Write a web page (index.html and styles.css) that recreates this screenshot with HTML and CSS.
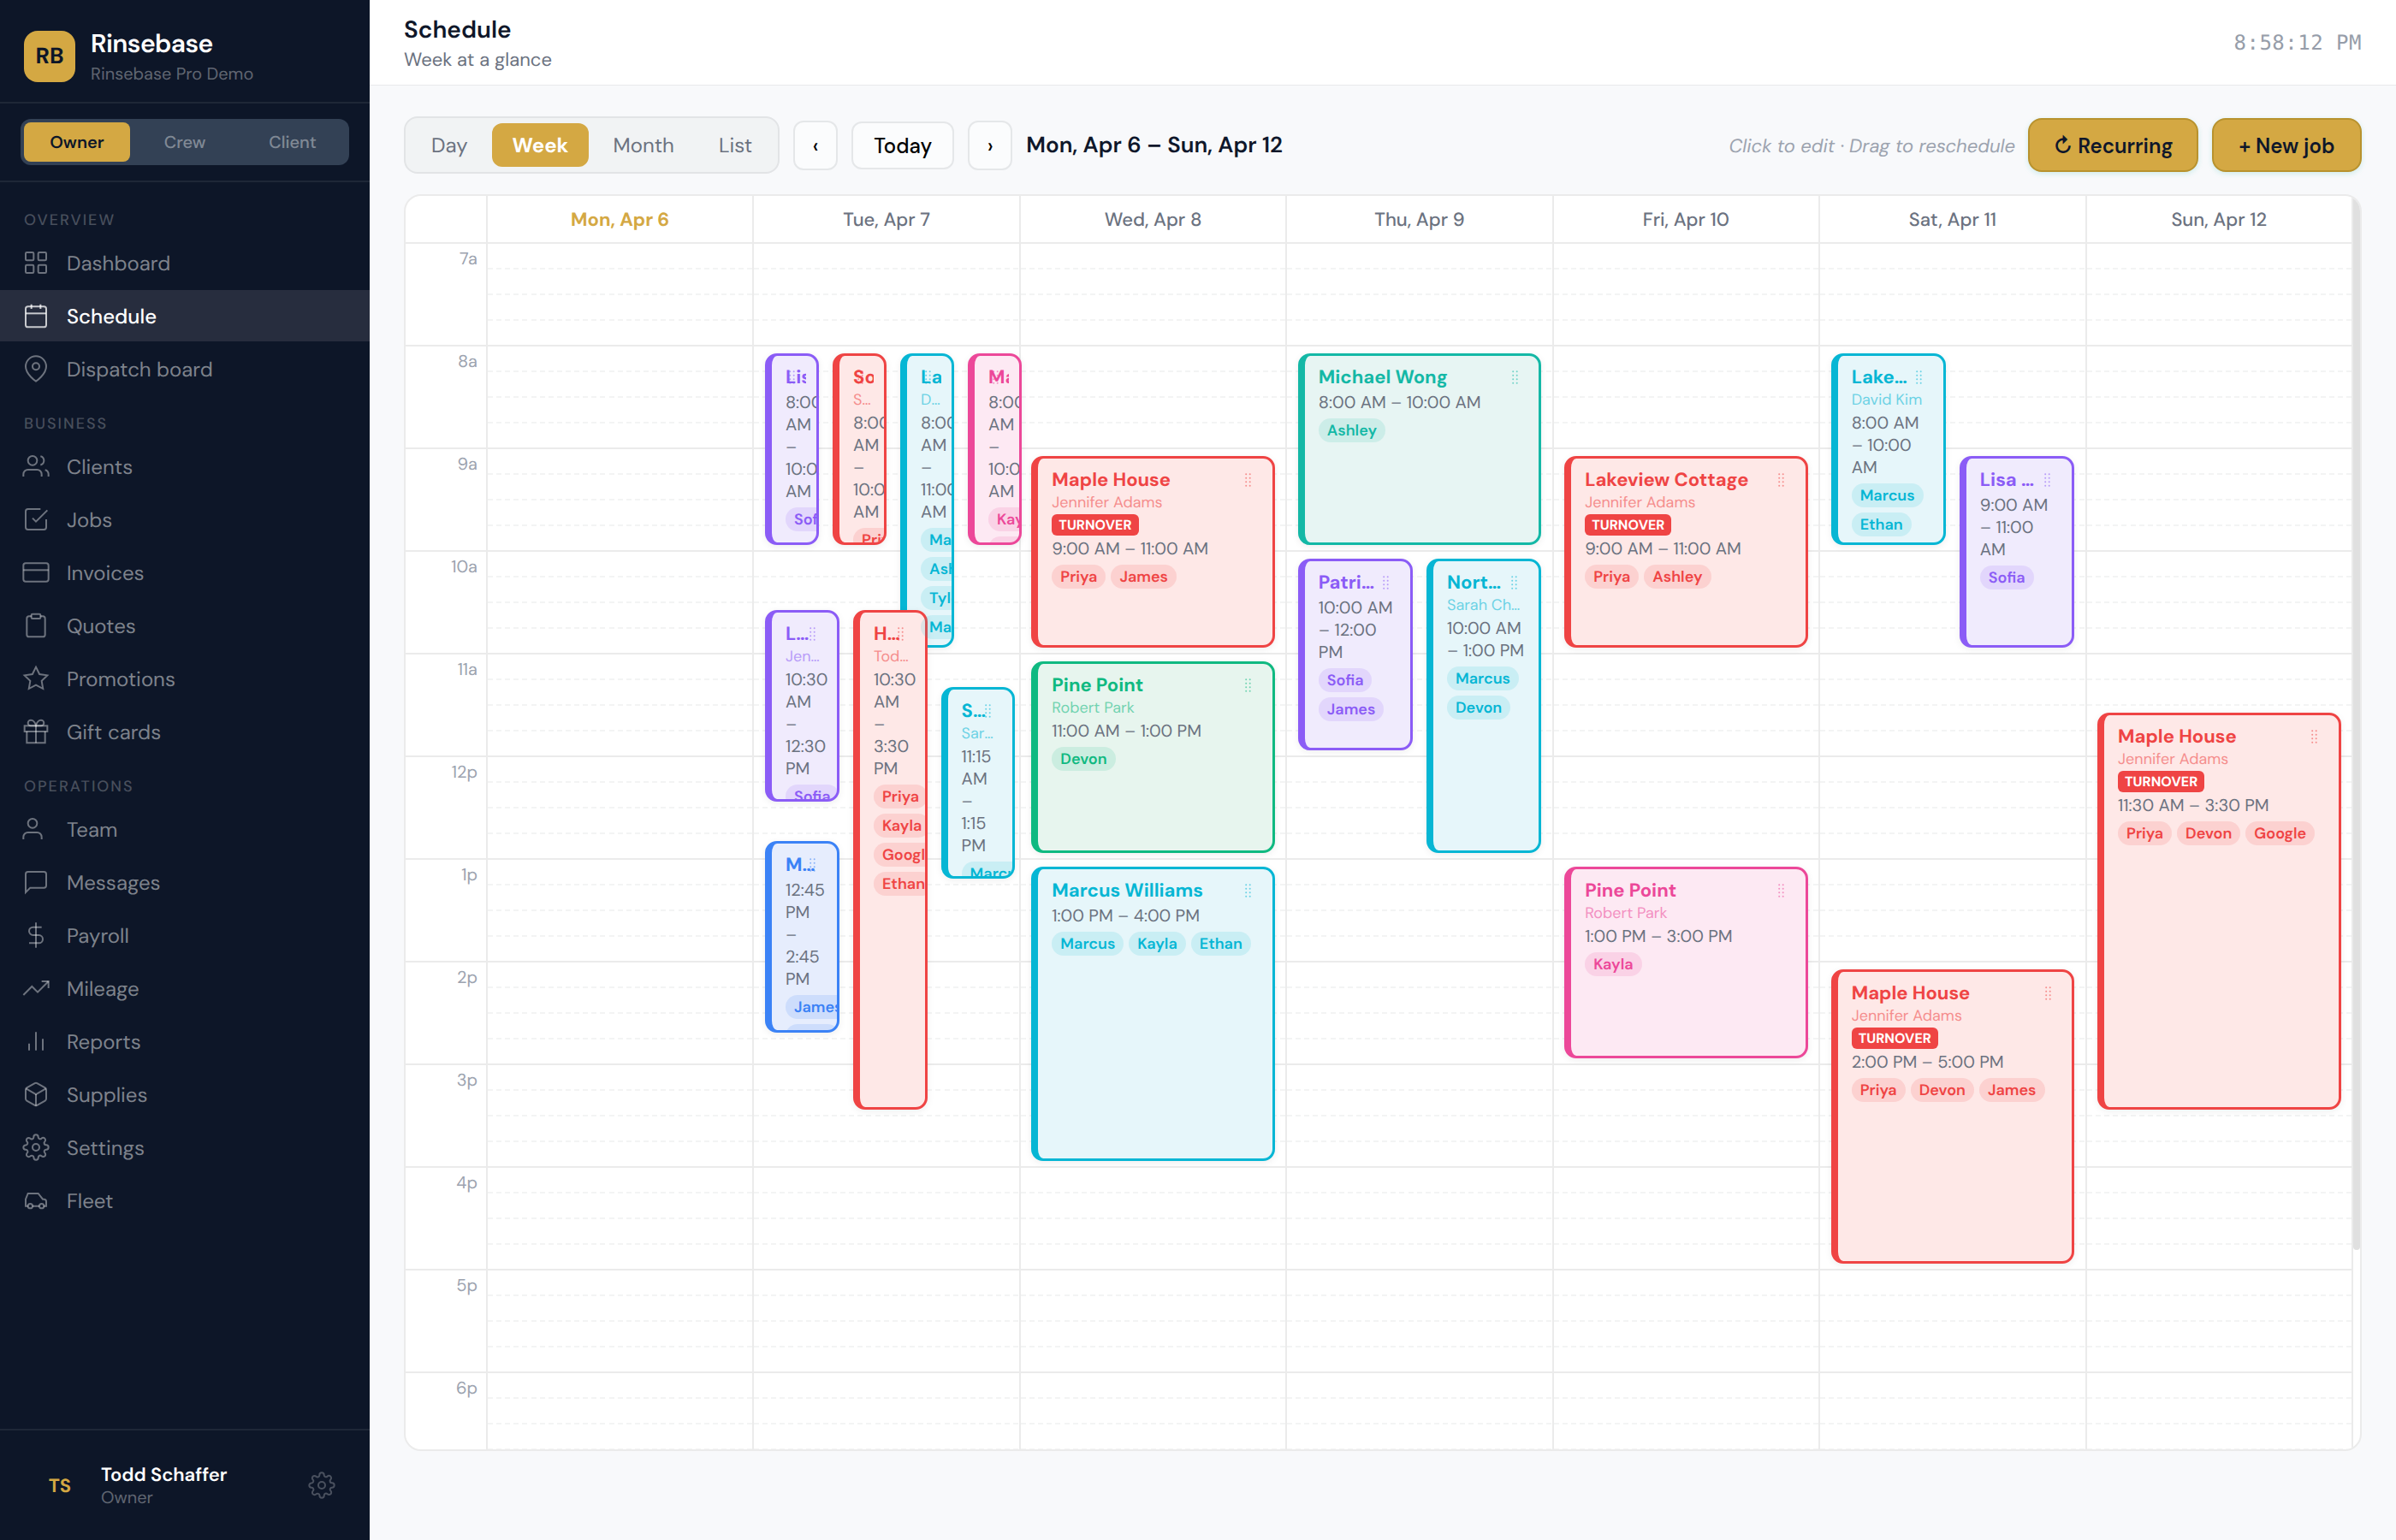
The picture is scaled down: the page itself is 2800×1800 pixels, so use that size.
FILE: index.html
```html
<!DOCTYPE html>
<html lang="en">
<head>
<meta charset="utf-8">
<title>Rinsebase – Schedule</title>
<link rel="stylesheet" href="styles.css">
</head>
<body>
<svg class="sprite" width="0" height="0" aria-hidden="true">
  <symbol id="grip" viewBox="0 0 9 18"><circle cx="2.2" cy="2.2" r="1"/><circle cx="6.7" cy="2.2" r="1"/><circle cx="2.2" cy="6.7" r="1"/><circle cx="6.7" cy="6.7" r="1"/><circle cx="2.2" cy="11.2" r="1"/><circle cx="6.7" cy="11.2" r="1"/><circle cx="2.2" cy="15.7" r="1"/><circle cx="6.7" cy="15.7" r="1"/></symbol>
  <symbol id="gear" viewBox="0 0 24 24"><circle cx="12" cy="12" r="3"/><path d="M19.4 15a1.65 1.65 0 0 0 .33 1.82l.06.06a2 2 0 0 1 0 2.83 2 2 0 0 1-2.83 0l-.06-.06a1.65 1.65 0 0 0-1.82-.33 1.65 1.65 0 0 0-1 1.51V21a2 2 0 0 1-2 2 2 2 0 0 1-2-2v-.09A1.65 1.65 0 0 0 9 19.4a1.65 1.65 0 0 0-1.82.33l-.06.06a2 2 0 0 1-2.83 0 2 2 0 0 1 0-2.83l.06-.06a1.65 1.65 0 0 0 .33-1.82 1.65 1.65 0 0 0-1.51-1H3a2 2 0 0 1-2-2 2 2 0 0 1 2-2h.09A1.65 1.65 0 0 0 4.6 9a1.65 1.65 0 0 0-.33-1.82l-.06-.06a2 2 0 0 1 0-2.83 2 2 0 0 1 2.83 0l.06.06a1.65 1.65 0 0 0 1.82.33H9a1.65 1.65 0 0 0 1-1.51V3a2 2 0 0 1 2-2 2 2 0 0 1 2 2v.09a1.65 1.65 0 0 0 1 1.51 1.65 1.65 0 0 0 1.82-.33l.06-.06a2 2 0 0 1 2.83 0 2 2 0 0 1 0 2.83l-.06.06a1.65 1.65 0 0 0-.33 1.82V9a1.65 1.65 0 0 0 1.51 1H21a2 2 0 0 1 2 2 2 2 0 0 1-2 2h-.09a1.65 1.65 0 0 0-1.51 1z"/></symbol>
</svg>
<div class="app">
  <aside class="sidebar">
    <div class="brand">
      <div class="logo">RB</div>
      <div>
        <div class="brand-name">Rinsebase</div>
        <div class="brand-sub">Rinsebase Pro Demo</div>
      </div>
    </div>
    <div class="roles">
      <div class="role-switch"><span class="role on">Owner</span><span class="role">Crew</span><span class="role">Client</span></div>
    </div>
    <nav class="nav">
      <div class="nav-label">OVERVIEW</div>
      <a class="item"><svg viewBox="0 0 24 24"><rect x="3" y="3" width="7" height="7" rx="1"/><rect x="14" y="3" width="7" height="7" rx="1"/><rect x="3" y="14" width="7" height="7" rx="1"/><rect x="14" y="14" width="7" height="7" rx="1"/></svg>Dashboard</a>
      <a class="item active"><svg viewBox="0 0 24 24"><rect x="3" y="4" width="18" height="18" rx="2"/><path d="M16 2v4M8 2v4"/><path d="M3 10h18"/></svg>Schedule</a>
      <a class="item"><svg viewBox="0 0 24 24"><path d="M21 10c0 7-9 13-9 13s-9-6-9-13a9 9 0 0 1 18 0z"/><circle cx="12" cy="10" r="3"/></svg>Dispatch board</a>
      <div class="nav-label">BUSINESS</div>
      <a class="item"><svg viewBox="0 0 24 24"><path d="M17 21v-2a4 4 0 0 0-4-4H5a4 4 0 0 0-4 4v2"/><circle cx="9" cy="7" r="4"/><path d="M23 21v-2a4 4 0 0 0-3-3.87M16 3.13a4 4 0 0 1 0 7.75"/></svg>Clients</a>
      <a class="item"><svg viewBox="0 0 24 24"><path d="M9 11l3 3L22 4"/><path d="M21 12v7a2 2 0 0 1-2 2H5a2 2 0 0 1-2-2V5a2 2 0 0 1 2-2h11"/></svg>Jobs</a>
      <a class="item"><svg viewBox="0 0 24 24"><rect x="1" y="4" width="22" height="16" rx="2"/><path d="M1 10h22"/></svg>Invoices</a>
      <a class="item"><svg viewBox="0 0 24 24"><path d="M16 4h2a2 2 0 0 1 2 2v14a2 2 0 0 1-2 2H6a2 2 0 0 1-2-2V6a2 2 0 0 1 2-2h2"/><rect x="8" y="2" width="8" height="4" rx="1"/></svg>Quotes</a>
      <a class="item"><svg viewBox="0 0 24 24"><path d="M12 2l3.09 6.26L22 9.27l-5 4.87 1.18 6.88L12 17.77l-6.18 3.25L7 14.14 2 9.27l6.91-1.01z"/></svg>Promotions</a>
      <a class="item"><svg viewBox="0 0 24 24"><path d="M20 12v10H4V12"/><rect x="2" y="7" width="20" height="5"/><path d="M12 22V7"/><path d="M12 7H7.5a2.5 2.5 0 0 1 0-5C11 2 12 7 12 7z"/><path d="M12 7h4.500a2.500 2.500 0 0 0 0-5C13 2 12 7 12 7z"/></svg>Gift cards</a>
      <div class="nav-label">OPERATIONS</div>
      <a class="item"><svg viewBox="0 0 24 24"><path d="M17 21v-2a4 4 0 0 0-4-4H5a4 4 0 0 0-4 4v2"/><circle cx="9" cy="7" r="4"/></svg>Team</a>
      <a class="item"><svg viewBox="0 0 24 24"><path d="M21 15a2 2 0 0 1-2 2H7l-4 4V5a2 2 0 0 1 2-2h14a2 2 0 0 1 2 2z"/></svg>Messages</a>
      <a class="item"><svg viewBox="0 0 24 24"><path d="M12 1v22"/><path d="M17 5H9.500a3.500 3.500 0 0 0 0 7h5a3.500 3.500 0 0 1 0 7H6"/></svg>Payroll</a>
      <a class="item"><svg viewBox="0 0 24 24"><path d="M23 6l-9.500 9.500-5-5L1 18"/><path d="M17 6h6v6"/></svg>Mileage</a>
      <a class="item"><svg viewBox="0 0 24 24"><path d="M18 20V10M12 20V4M6 20v-6"/></svg>Reports</a>
      <a class="item"><svg viewBox="0 0 24 24"><path d="M21 16V8a2 2 0 0 0-1-1.730l-7-4a2 2 0 0 0-2 0l-7 4A2 2 0 0 0 3 8v8a2 2 0 0 0 1 1.730l7 4a2 2 0 0 0 2 0l7-4A2 2 0 0 0 21 16z"/><path d="M3.270 6.960L12 12.010l8.730-5.050"/><path d="M12 22.080V12"/></svg>Supplies</a>
      <a class="item"><svg><use href="#gear"/></svg>Settings</a>
      <a class="item"><svg viewBox="0 0 24 24"><path d="M5 17H3v-6l2-5h9l4 5h1a2 2 0 0 1 2 2v4h-2M9 17h6"/><circle cx="7" cy="17" r="2"/><circle cx="17" cy="17" r="2"/></svg>Fleet</a>
    </nav>
    <div class="user">
      <div class="avatar">TS</div>
      <div class="user-text">
        <div class="user-name">Todd Schaffer</div>
        <div class="user-role">Owner</div>
      </div>
      <svg class="user-gear"><use href="#gear"/></svg>
    </div>
  </aside>

  <main class="main">
    <header class="topbar">
      <div>
        <div class="page-title">Schedule</div>
        <div class="page-sub">Week at a glance</div>
      </div>
      <div class="clock">8:58:12 PM</div>
    </header>

    <section class="content">
      <div class="toolbar">
        <div class="segments"><span class="seg">Day</span><span class="seg on">Week</span><span class="seg">Month</span><span class="seg">List</span></div>
        <button class="btn arrow">‹</button>
        <button class="btn today">Today</button>
        <button class="btn arrow">›</button>
        <div class="range">Mon, Apr 6 – Sun, Apr 12</div>
        <div class="hint">Click to edit · Drag to reschedule</div>
        <button class="btn gold recurring">↻ Recurring</button>
        <button class="btn gold">+ New job</button>
      </div>

      <div class="calendar">
        <div class="cal-head">
          <div class="corner"></div>
          <div class="day-name today-name">Mon, Apr 6</div>
          <div class="day-name">Tue, Apr 7</div>
          <div class="day-name">Wed, Apr 8</div>
          <div class="day-name">Thu, Apr 9</div>
          <div class="day-name">Fri, Apr 10</div>
          <div class="day-name">Sat, Apr 11</div>
          <div class="day-name">Sun, Apr 12</div>
        </div>
        <div class="cal-body">
          <div class="hours">
            <div class="hour">7a</div><div class="hour">8a</div><div class="hour">9a</div><div class="hour">10a</div><div class="hour">11a</div><div class="hour">12p</div><div class="hour">1p</div><div class="hour">2p</div><div class="hour">3p</div><div class="hour">4p</div><div class="hour">5p</div><div class="hour">6p</div>
          </div>
          <div class="day"></div>
          <div class="day"><div class="lane">
            <div class="event purple" style="top:128px;height:224px;left:12.5px;width:63px"><svg class="grip"><use href="#grip"/></svg><div class="title">Lisa Nguyen</div><div class="time">8:00 AM – 10:00 AM</div><div class="chips"><span class="chip">Sofia</span></div></div>
            <div class="event red" style="top:128px;height:224px;left:91.7px;width:63px"><svg class="grip"><use href="#grip"/></svg><div class="title">South Shore</div><div class="client">Sarah Chen</div><div class="time">8:00 AM – 10:00 AM</div><div class="chips"><span class="chip">Priya</span></div></div>
            <div class="event cyan" style="top:128px;height:344px;left:170.7px;width:63px"><svg class="grip"><use href="#grip"/></svg><div class="title">Lake House</div><div class="client">David Kim</div><div class="time">8:00 AM – 11:00 AM</div><div class="chips"><span class="chip">Marcus</span><span class="chip">Ashley</span><span class="chip">Tyler</span><span class="chip">Maria</span></div></div>
            <div class="event pink" style="top:128px;height:224px;left:249.7px;width:63px"><svg class="grip"><use href="#grip"/></svg><div class="title">Maria Lopez</div><div class="time">8:00 AM – 10:00 AM</div><div class="chips"><span class="chip">Kayla</span><span class="chip">Devon</span></div></div>
            <div class="event purple" style="top:428px;height:224px;left:12.5px;width:87px"><svg class="grip"><use href="#grip"/></svg><div class="title">Lakeview Cottage</div><div class="client">Jennifer Adams</div><div class="time">10:30 AM – 12:30 PM</div><div class="chips"><span class="chip">Sofia</span></div></div>
            <div class="event red" style="top:428px;height:584px;left:115.5px;width:87px"><svg class="grip"><use href="#grip"/></svg><div class="title">Harbor House</div><div class="client">Todd Schaffer</div><div class="time">10:30 AM – 3:30 PM</div><div class="chips"><span class="chip">Priya</span><span class="chip">Kayla</span><span class="chip">Google</span><span class="chip">Ethan</span></div></div>
            <div class="event cyan" style="top:518px;height:224px;left:218.2px;width:86px"><svg class="grip"><use href="#grip"/></svg><div class="title">South Shore</div><div class="client">Sarah Chen</div><div class="time">11:15 AM – 1:15 PM</div><div class="chips"><span class="chip">Marcus</span></div></div>
            <div class="event blue" style="top:698px;height:224px;left:12.5px;width:87px"><svg class="grip"><use href="#grip"/></svg><div class="title">Michael Wong</div><div class="time">12:45 PM – 2:45 PM</div><div class="chips"><span class="chip">James</span><span class="chip">Tyler</span></div></div>
          </div></div>
          <div class="day"><div class="lane">
            <div class="event red" style="top:248px;height:224px;left:12.5px;width:284.5px"><svg class="grip"><use href="#grip"/></svg><div class="title">Maple House</div><div class="client">Jennifer Adams</div><div class="badge">TURNOVER</div><div class="time">9:00 AM – 11:00 AM</div><div class="chips"><span class="chip">Priya</span><span class="chip">James</span></div></div>
            <div class="event green" style="top:488px;height:224px;left:12.5px;width:284.5px"><svg class="grip"><use href="#grip"/></svg><div class="title">Pine Point</div><div class="client">Robert Park</div><div class="time">11:00 AM – 1:00 PM</div><div class="chips"><span class="chip">Devon</span></div></div>
            <div class="event cyan" style="top:728px;height:344px;left:12.5px;width:284.5px"><svg class="grip"><use href="#grip"/></svg><div class="title">Marcus Williams</div><div class="time">1:00 PM – 4:00 PM</div><div class="chips"><span class="chip">Marcus</span><span class="chip">Kayla</span><span class="chip">Ethan</span></div></div>
          </div></div>
          <div class="day"><div class="lane">
            <div class="event teal" style="top:128px;height:224px;left:12.5px;width:284.5px"><svg class="grip"><use href="#grip"/></svg><div class="title">Michael Wong</div><div class="time">8:00 AM – 10:00 AM</div><div class="chips"><span class="chip">Ashley</span></div></div>
            <div class="event purple" style="top:368px;height:224px;left:12.5px;width:134px"><svg class="grip"><use href="#grip"/></svg><div class="title">Patricia Moore</div><div class="time">10:00 AM – 12:00 PM</div><div class="chips"><span class="chip">Sofia</span><span class="chip">James</span></div></div>
            <div class="event cyan" style="top:368px;height:344px;left:162.7px;width:134px"><svg class="grip"><use href="#grip"/></svg><div class="title">North Shore</div><div class="client">Sarah Chen</div><div class="time">10:00 AM – 1:00 PM</div><div class="chips"><span class="chip">Marcus</span><span class="chip">Devon</span></div></div>
          </div></div>
          <div class="day"><div class="lane">
            <div class="event red" style="top:248px;height:224px;left:12.5px;width:284.5px"><svg class="grip"><use href="#grip"/></svg><div class="title">Lakeview Cottage</div><div class="client">Jennifer Adams</div><div class="badge">TURNOVER</div><div class="time">9:00 AM – 11:00 AM</div><div class="chips"><span class="chip">Priya</span><span class="chip">Ashley</span></div></div>
            <div class="event pink" style="top:728px;height:224px;left:12.5px;width:284.5px"><svg class="grip"><use href="#grip"/></svg><div class="title">Pine Point</div><div class="client">Robert Park</div><div class="time">1:00 PM – 3:00 PM</div><div class="chips"><span class="chip">Kayla</span></div></div>
          </div></div>
          <div class="day"><div class="lane">
            <div class="event cyan" style="top:128px;height:224px;left:12.5px;width:134px"><svg class="grip"><use href="#grip"/></svg><div class="title">Lakeside Loft</div><div class="client">David Kim</div><div class="time">8:00 AM – 10:00 AM</div><div class="chips"><span class="chip">Marcus</span><span class="chip">Ethan</span></div></div>
            <div class="event purple" style="top:248px;height:224px;left:162.7px;width:134px"><svg class="grip"><use href="#grip"/></svg><div class="title">Lisa Nguyen</div><div class="time">9:00 AM – 11:00 AM</div><div class="chips"><span class="chip">Sofia</span></div></div>
            <div class="event red" style="top:848px;height:344px;left:12.5px;width:284.5px"><svg class="grip"><use href="#grip"/></svg><div class="title">Maple House</div><div class="client">Jennifer Adams</div><div class="badge">TURNOVER</div><div class="time">2:00 PM – 5:00 PM</div><div class="chips"><span class="chip">Priya</span><span class="chip">Devon</span><span class="chip">James</span></div></div>
          </div></div>
          <div class="day"><div class="lane">
            <div class="event red" style="top:548px;height:464px;left:12.5px;width:284.5px"><svg class="grip"><use href="#grip"/></svg><div class="title">Maple House</div><div class="client">Jennifer Adams</div><div class="badge">TURNOVER</div><div class="time">11:30 AM – 3:30 PM</div><div class="chips"><span class="chip">Priya</span><span class="chip">Devon</span><span class="chip">Google</span></div></div>
          </div></div>
        </div>
        <div class="scroll-thumb"></div>
      </div>
    </section>
  </main>
</div>
</body>
</html>
```
FILE: styles.css
```css
* { box-sizing: border-box; }
body {
  margin: 0;
  background: #f8f9fb;
  color: #0f172a;
  font-family: "DM Sans", Inter, "Open Sans", sans-serif;
  text-rendering: geometricPrecision;
}
button { font-family: inherit; margin: 0; }
.sprite { position: absolute; }
.app { display: flex; width: 2800px; height: 1800px; overflow: hidden; }

/* Sidebar */
.sidebar {
  width: 432px;
  flex: none;
  display: flex;
  flex-direction: column;
  background: #0d1628;
  color: #fff;
}
.brand {
  height: 121px;
  padding: 34px 28px 0;
  display: flex;
  align-items: flex-start;
  gap: 18px;
  border-bottom: 2px solid #1e2737;
}
.logo {
  width: 60px;
  height: 60px;
  margin-top: 2px;
  border-radius: 16px;
  background: #d4a843;
  color: #0d1628;
  display: flex;
  align-items: center;
  justify-content: center;
  font-size: 26px;
  font-weight: 700;
}
.brand-name { font-size: 30px; line-height: 36px; font-weight: 600; letter-spacing: -0.6px; }
.brand-sub { margin-top: 4px; font-size: 20px; line-height: 26px; color: rgba(255, 255, 255, .35); }
.roles { height: 92px; padding: 18px 24px; border-bottom: 2px solid #1e2737; }
.role-switch { display: flex; gap: 2px; height: 54px; padding: 4px; border-radius: 12px; background: #334155; }
.role {
  flex: 1;
  display: flex;
  align-items: center;
  justify-content: center;
  padding-top: 2px;
  border-radius: 8px;
  font-size: 20px;
  font-weight: 500;
  color: rgba(255, 255, 255, .4);
}
.role.on { background: #d4a843; color: #0d1628; font-weight: 600; }
.nav { flex: 1; padding-top: 12px; }
.nav-label {
  height: 52px;
  padding: 18px 28px 0;
  font-size: 18px;
  line-height: 28px;
  font-weight: 500;
  letter-spacing: 2px;
  color: rgba(255, 255, 255, .25);
}
.item {
  display: flex;
  align-items: center;
  gap: 20px;
  height: 60px;
  margin-bottom: 2px;
  padding: 2px 0 0 26px;
  font-size: 24px;
  color: rgba(255, 255, 255, .47);
}
.item svg, .user-gear {
  width: 32px;
  height: 32px;
  flex: none;
  fill: none;
  stroke: rgba(255, 255, 255, .4);
  stroke-width: 1.5;
}
.item svg { margin-top: -2px; }
.item.active { background: #272d3e; color: #fff; font-weight: 500; }
.item.active svg { stroke: rgba(255, 255, 255, .75); }
.user {
  height: 130px;
  padding: 0 40px;
  display: flex;
  align-items: center;
  gap: 18px;
  border-top: 2px solid #1e2737;
}
.avatar {
  width: 60px;
  height: 60px;
  display: flex;
  align-items: center;
  justify-content: center;
  font-size: 22px;
  font-weight: 700;
  color: #d4a843;
}
.user-text { flex: 1; }
.user-name { font-size: 22px; line-height: 28px; font-weight: 600; }
.user-role { margin: 1px 0 -1px; font-size: 20px; line-height: 25px; color: rgba(255, 255, 255, .35); }
.user-gear { stroke: rgba(255, 255, 255, .25); }

/* Top bar */
.main { flex: 1; min-width: 0; }
.topbar {
  height: 100px;
  padding: 1px 40px 0;
  display: flex;
  align-items: center;
  justify-content: space-between;
  background: #fff;
  border-bottom: 1px solid #e8eaec;
}
.page-title { font-size: 28px; line-height: 36px; font-weight: 600; }
.page-sub { margin-top: 3px; font-size: 22px; line-height: 28px; color: #6b7280; }
.clock {
  font-family: "DejaVu Sans Mono", monospace;
  font-size: 24px;
  letter-spacing: .5px;
  color: #969da9;
}

/* Toolbar */
.content { padding: 36px 40px 0; }
.toolbar { display: flex; align-items: center; gap: 16px; height: 67px; }
.segments {
  display: flex;
  gap: 4px;
  height: 67px;
  padding: 6px;
  border: 2px solid #e2e4e6;
  border-radius: 16px;
  background: #f1f3f4;
}
.seg {
  display: flex;
  align-items: center;
  padding: 1px 24px 0;
  border-radius: 12px;
  font-size: 24px;
  color: #6b7280;
}
.seg.on { background: #d4a843; color: #fff; font-weight: 700; }
.btn {
  display: flex;
  align-items: center;
  justify-content: center;
  border: 2px solid #e5e7e9;
  border-radius: 12px;
  background: #fbfcfd;
  color: #000;
  font-size: 24px;
  font-weight: 500;
  padding: 1px 0 0;
}
.arrow { width: 52px; height: 58px; }
.today { width: 120px; height: 56px; }
.range { padding-top: 1px; font-size: 26px; font-weight: 600; }
.hint { margin: 1px -1px 0 auto; font-size: 22px; font-style: italic; color: #9ca3af; }
.gold {
  height: 63px;
  padding: 1px 29.5px 0;
  border-color: #b8922e;
  border-radius: 16px;
  background: #d4a843;
  color: #0f172a;
  font-weight: 600;
  box-shadow: 0 2px 6px rgba(20, 184, 166, .18);
}
.recurring { padding: 1px 27.5px 0; }

/* Calendar */
.calendar {
  position: relative;
  height: 1469px;
  margin-top: 24px;
  padding-right: 8px;
  border: 2px solid #ebebeb;
  border-radius: 20px;
  background: #fff;
  overflow: hidden;
}
.cal-head, .cal-body { display: grid; grid-template-columns: 96px repeat(7, 1fr); }
.cal-head { height: 56px; border-bottom: 2px solid #ebebeb; }
.corner, .day-name { border-right: 2px solid #ebebeb; }
.day-name {
  display: flex;
  align-items: center;
  justify-content: center;
  font-size: 22px;
  font-weight: 500;
  color: #6b7280;
}
.today-name { color: #d4a843; font-weight: 700; }
.hours { border-right: 2px solid #ebebeb; }
.hour {
  height: 120px;
  padding: 5px 10px 0 0;
  border-bottom: 2px solid #ebebeb;
  font-size: 20px;
  line-height: 26px;
  text-align: right;
  color: #9ca3af;
}
/* solid line each hour, dashed line each quarter hour */
.day {
  height: 1440px;
  border-right: 2px solid #ebebeb;
  background:
    repeating-linear-gradient(to bottom, transparent 0 118px, #ebebeb 118px 120px),
    repeating-linear-gradient(to bottom, #fff 0 28px, transparent 28px 30px),
    repeating-linear-gradient(to right, #f3f4f4 0 6px, #fff 6px 10.114px);
}
.lane { position: relative; }
.scroll-thumb {
  position: absolute;
  top: 0;
  right: 0;
  width: 8px;
  height: 1232px;
  border-radius: 4px;
  background: #e0e0e0;
}

/* Events */
.event {
  position: absolute;
  padding: 10px 13px 0 16px;
  border: 3px solid var(--c);
  border-left-width: 8px;
  border-radius: 14px;
  background: var(--bg);
  box-shadow: 0 2px 8px rgba(0, 0, 0, .07);
  overflow: hidden;
}
.grip {
  position: absolute;
  top: 15.5px;
  right: 23.6px;
  width: 9px;
  height: 18px;
  fill: var(--c);
  opacity: .55;
}
.title {
  padding-right: 24px;
  font-size: 22px;
  line-height: 29px;
  font-weight: 700;
  color: var(--c);
  white-space: nowrap;
  overflow: hidden;
  text-overflow: ellipsis;
}
.client {
  font-size: 18px;
  line-height: 24px;
  color: var(--c);
  opacity: .55;
  white-space: nowrap;
  overflow: hidden;
  text-overflow: ellipsis;
}
.badge {
  width: fit-content;
  margin-top: 2px;
  padding: 0 8px;
  border-radius: 6px;
  background: var(--c);
  color: #fff;
  font-size: 16px;
  line-height: 25px;
  font-weight: 700;
}
.time { margin: 3px 0 -1px; font-size: 20px; line-height: 26px; color: #6b7280; }
.chips {
  position: relative;
  z-index: 1;
  display: flex;
  flex-wrap: wrap;
  gap: 6px;
  margin: 6px -3px 0 0;
}
.chip {
  padding: 0 10px;
  border-radius: 14px;
  background: var(--chip);
  color: var(--c);
  font-size: 18px;
  line-height: 28px;
  font-weight: 600;
}
.purple { --c: #8b5cf6; --bg: #f0ebfd; --chip: rgba(139, 92, 246, .14); }
.red { --c: #ef4444; --bg: #fee8e7; --chip: rgba(239, 68, 68, .14); }
.cyan { --c: #06b6d4; --bg: #e6f6fa; --chip: rgba(6, 182, 212, .13); }
.pink { --c: #ec4899; --bg: #fde9f3; --chip: rgba(236, 72, 153, .14); }
.green { --c: #10b981; --bg: #e7f5ee; --chip: rgba(16, 185, 129, .13); }
.blue { --c: #3b82f6; --bg: #e6edfd; --chip: rgba(59, 130, 246, .14); }
.teal { --c: #14b8a6; --bg: #e7f5f3; --chip: rgba(20, 184, 166, .13); }
```
